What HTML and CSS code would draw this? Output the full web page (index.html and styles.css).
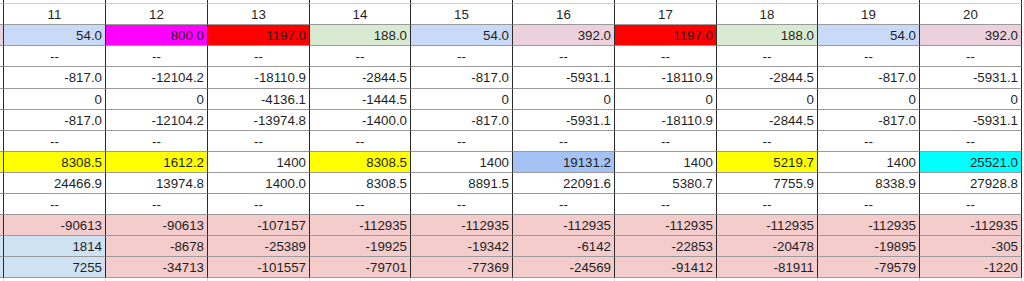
FILE: index.html
```html
<!DOCTYPE html>
<html>
<head>
<meta charset="utf-8">
<link rel="stylesheet" href="styles.css">
</head>
<body>
<div class="sheet">
  <div class="row spacer"><div></div><div></div><div></div><div></div><div></div><div></div><div></div><div></div><div></div><div></div><div></div></div>
  <div class="row head"><div></div><div>11</div><div>12</div><div>13</div><div>14</div><div>15</div><div>16</div><div>17</div><div>18</div><div>19</div><div>20</div></div>
  <div class="row"><div class="pk"></div><div class="lb">54.0</div><div class="mg">800.0</div><div class="rd">1197.0</div><div class="gr">188.0</div><div class="lb">54.0</div><div class="pk">392.0</div><div class="rd">1197.0</div><div class="gr">188.0</div><div class="lb">54.0</div><div class="pk">392.0</div></div>
  <div class="row dash"><div></div><div>--</div><div>--</div><div>--</div><div>--</div><div>--</div><div>--</div><div>--</div><div>--</div><div>--</div><div>--</div></div>
  <div class="row tall"><div></div><div>-817.0</div><div>-12104.2</div><div>-18110.9</div><div>-2844.5</div><div>-817.0</div><div>-5931.1</div><div>-18110.9</div><div>-2844.5</div><div>-817.0</div><div>-5931.1</div></div>
  <div class="row"><div></div><div>0</div><div>0</div><div>-4136.1</div><div>-1444.5</div><div>0</div><div>0</div><div>0</div><div>0</div><div>0</div><div>0</div></div>
  <div class="row"><div></div><div>-817.0</div><div>-12104.2</div><div>-13974.8</div><div>-1400.0</div><div>-817.0</div><div>-5931.1</div><div>-18110.9</div><div>-2844.5</div><div>-817.0</div><div>-5931.1</div></div>
  <div class="row dash"><div></div><div>--</div><div>--</div><div>--</div><div>--</div><div>--</div><div>--</div><div>--</div><div>--</div><div>--</div><div>--</div></div>
  <div class="row"><div class="yl"></div><div class="yl">8308.5</div><div class="yl">1612.2</div><div>1400</div><div class="yl">8308.5</div><div>1400</div><div class="b2">19131.2</div><div>1400</div><div class="yl">5219.7</div><div>1400</div><div class="cy">25521.0</div></div>
  <div class="row"><div></div><div>24466.9</div><div>13974.8</div><div>1400.0</div><div>8308.5</div><div>8891.5</div><div>22091.6</div><div>5380.7</div><div>7755.9</div><div>8338.9</div><div>27928.8</div></div>
  <div class="row dash"><div></div><div>--</div><div>--</div><div>--</div><div>--</div><div>--</div><div>--</div><div>--</div><div>--</div><div>--</div><div>--</div></div>
  <div class="row allred"><div></div><div>-90613</div><div>-90613</div><div>-107157</div><div>-112935</div><div>-112935</div><div>-112935</div><div>-112935</div><div>-112935</div><div>-112935</div><div>-112935</div></div>
  <div class="row allred"><div class="bl"></div><div class="bl">1814</div><div>-8678</div><div>-25389</div><div>-19925</div><div>-19342</div><div>-6142</div><div>-22853</div><div>-20478</div><div>-19895</div><div>-305</div></div>
  <div class="row allred"><div class="bl"></div><div class="bl">7255</div><div>-34713</div><div>-101557</div><div>-79701</div><div>-77369</div><div>-24569</div><div>-91412</div><div>-81911</div><div>-79579</div><div>-1220</div></div>
  <div class="row tail"><div></div><div></div><div></div><div></div><div></div><div></div><div></div><div></div><div></div><div></div><div></div></div>
</div>
</body>
</html>
```
FILE: styles.css
```css
html, body {
  margin: 0;
  padding: 0;
  background: #ffffff;
}
body {
  width: 1024px;
  height: 281px;
  overflow: hidden;
  font-family: "Liberation Sans", Arial, sans-serif;
  font-size: 13.3px;
  color: #1f1f1f;
}
.sheet {
  display: flex;
  flex-direction: column;
}
.row {
  display: grid;
  grid-template-columns: 4px 102px 102px 102px 101px 102px 102px 102px 101px 102px 102px;
  height: 21px;
}
.row > div {
  box-sizing: border-box;
  border-right: 1px solid #2a2a2a;
  border-bottom: 1px solid #9a9a9a;
  display: flex;
  align-items: center;
  justify-content: flex-end;
  padding-right: 3px;
  white-space: nowrap;
  overflow: hidden;
}
.row > div:first-child {
  padding: 0;
}
.row.spacer {
  height: 4px;
}
.row.spacer > div {
  border-bottom-color: #cfcfcf;
}
.row.head > div,
.row.dash > div {
  justify-content: center;
  padding-right: 0;
}
.row.tall {
  height: 22px;
}
.row.tail {
  height: 8px;
}
.row.tail > div {
  border-bottom: none;
  border-right-color: #d6d6d6;
}
.lb { background: #c9daf8; }
.mg { background: #ff00ff; }
.rd { background: #ff0000; }
.gr { background: #d9ead3; }
.pk { background: #ead1dc; }
.yl { background: #ffff00; }
.b2 { background: #a4c2f4; }
.cy { background: #00ffff; }
.allred > div { background: #f4cccc; }
.allred > div.bl { background: #cfe2f3; }
```
